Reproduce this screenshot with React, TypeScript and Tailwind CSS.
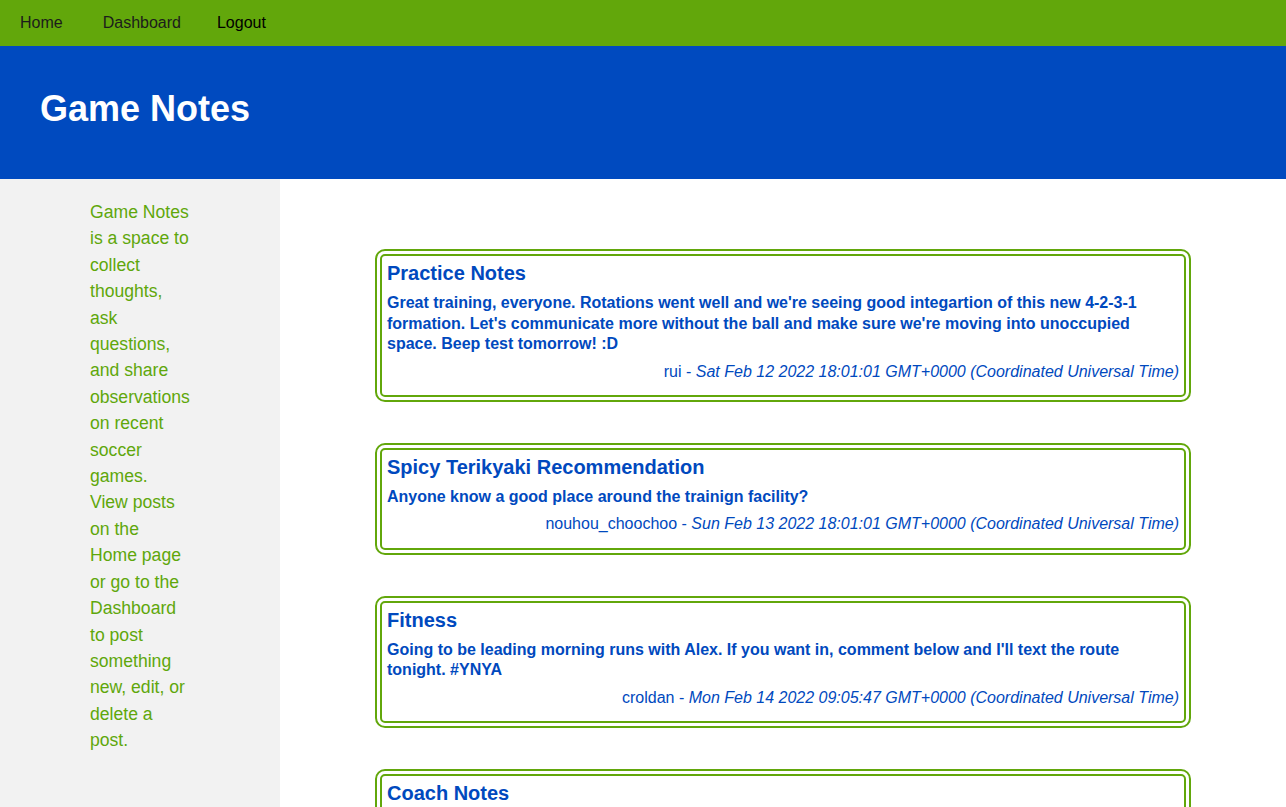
import React from 'react'

interface Post {
  id: number
  title: string
  body: string
  author: string
  date: string
}

const posts: Post[] = [
  {
    id: 1,
    title: 'Practice Notes',
    body: "Great training, everyone. Rotations went well and we're seeing good integartion of this new 4-2-3-1 formation. Let's communicate more without the ball and make sure we're moving into unoccupied space. Beep test tomorrow! :D",
    author: 'rui',
    date: 'Sat Feb 12 2022 18:01:01 GMT+0000 (Coordinated Universal Time)',
  },
  {
    id: 2,
    title: 'Spicy Terikyaki Recommendation',
    body: 'Anyone know a good place around the trainign facility?',
    author: 'nouhou_choochoo',
    date: 'Sun Feb 13 2022 18:01:01 GMT+0000 (Coordinated Universal Time)',
  },
  {
    id: 3,
    title: 'Fitness',
    body: "Going to be leading morning runs with Alex. If you want in, comment below and I'll text the route tonight. #YNYA",
    author: 'croldan',
    date: 'Mon Feb 14 2022 09:05:47 GMT+0000 (Coordinated Universal Time)',
  },
  {
    id: 4,
    title: 'Coach Notes',
    body: 'Film session moved to Thursday. Bring your notebooks and questions from the last match.',
    author: 'coach',
    date: 'Tue Feb 15 2022 10:12:33 GMT+0000 (Coordinated Universal Time)',
  },
]

function PostCard({ post }: { post: Post }) {
  return (
    <div className="w-[816px] mx-auto mb-[41px] border-[7px] border-double border-[#62a70b] rounded-[10px] bg-white px-[5px] pt-[6px] pb-[14px] text-[#0049be]">
      <h3 className="text-[20px] leading-[23px] font-bold">{post.title}</h3>
      <p className="mt-[8px] text-[16px] leading-[20.5px] font-bold">{post.body}</p>
      <p className="mt-[8px] text-[16px] leading-[18.4px] text-right">
        {post.author} - <em>{post.date}</em>
      </p>
    </div>
  )
}

export default function App() {
  return (
    <div className="min-h-screen flex flex-col bg-white" style={{ fontFamily: '"Liberation Sans", Arial, sans-serif' }}>
      {/* nav */}
      <nav className="h-[46px] bg-[#62a70b] flex items-center pl-[20px] text-[16px]">
        <a className="text-[#1c1c1c]">Home</a>
        <a className="ml-[40px] text-[#1c1c1c]">Dashboard</a>
        <a className="ml-[36px] text-black">Logout</a>
      </nav>

      {/* header */}
      <header className="h-[133px] bg-[#004abf] flex items-center pl-[40px] pb-[8px]">
        <h1 className="text-white text-[36px] font-bold">Game Notes</h1>
      </header>

      <div className="flex flex-1">
        <aside className="w-[280px] shrink-0 bg-[#f2f2f2] pl-[90px] pt-[20px]">
          <p className="w-[100px] text-[17.6px] leading-[26.4px] text-[#5fa70b]">
            Game Notes is a space to collect thoughts, ask questions, and share observations on recent soccer games. View posts on the Home page or go to the Dashboard to post something new, edit, or delete a post.
          </p>
        </aside>

        <main className="flex-1 pt-[70px]">
          {posts.map((post) => (
            <PostCard key={post.id} post={post} />
          ))}
        </main>
      </div>
    </div>
  )
}
